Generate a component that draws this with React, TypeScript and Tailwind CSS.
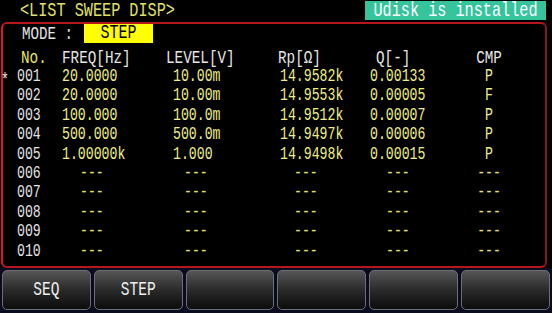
import React from "react";

type Row = {
  no: string;
  freq?: string;
  level?: string;
  rp?: string;
  q?: string;
  cmp?: string;
  active?: boolean;
};

const rows: Row[] = [
  { no: "001", freq: "20.0000", level: "10.00m", rp: "14.9582k", q: "0.00133", cmp: "P", active: true },
  { no: "002", freq: "20.0000", level: "10.00m", rp: "14.9553k", q: "0.00005", cmp: "F" },
  { no: "003", freq: "100.000", level: "100.0m", rp: "14.9512k", q: "0.00007", cmp: "P" },
  { no: "004", freq: "500.000", level: "500.0m", rp: "14.9497k", q: "0.00006", cmp: "P" },
  { no: "005", freq: "1.00000k", level: "1.000", rp: "14.9498k", q: "0.00015", cmp: "P" },
  { no: "006" },
  { no: "007" },
  { no: "008" },
  { no: "009" },
  { no: "010" },
];

const softkeys = ["SEQ", "STEP", "", "", "", ""];

const Dash = ({ pad }: { pad: string }) => (
  <span className={`${pad} text-[#e0e070]`}>---</span>
);

const App = () => {
  return (
    <div className="w-[552px] h-[313px] bg-black overflow-hidden flex flex-col font-[family-name:'Liberation_Mono',monospace]">
      {/* title bar */}
      <div className="h-[22px] flex items-start">
        <div className="ml-[20px] mt-[4px] leading-[14px] text-[15.2px] text-[#e0e068] scale-y-[1.35] whitespace-pre">
          &lt;LIST SWEEP DISP&gt;
        </div>
        <div className="ml-auto mr-[6px] mt-[1px] w-[181px] h-[19px] bg-[#36c49d] flex items-center justify-center">
          <span className="text-[15.2px] leading-[14px] text-white scale-y-[1.3] whitespace-pre">Udisk is installed</span>
        </div>
      </div>

      {/* main frame */}
      <div className="ml-[1px] w-[546px] h-[246px] rounded-[6px] border-2 border-[#b8161e] border-l-[#d81c1c] border-r-[#8c1424] bg-black flex flex-col">
        {/* mode row */}
        <div className="h-[19px] flex items-center">
          <span className="ml-[19px] w-[62px] text-[14.2px] leading-[14px] text-[#e4e4e4] scale-y-[1.35] whitespace-pre">MODE :</span>
          <div className="w-[69px] h-[19px] bg-[#ffff00] flex items-center justify-center">
            <span className="text-[15px] leading-[14px] text-black scale-y-[1.3]">STEP</span>
          </div>
        </div>

        {/* header */}
        <div className="mt-[5px] h-[19px] flex items-center text-[14.3px] leading-[14px] text-[#e6e6e6] scale-y-[1.3] whitespace-pre">
          <span className="w-[18px]" />
          <span className="w-[41px] text-[#e8e860]">No.</span>
          <span className="w-[104px]">FREQ[Hz]</span>
          <span className="w-[112px]">LEVEL[V]</span>
          <span className="w-[98px]">Rp[Ω]</span>
          <span className="w-[79px]">Q[-]</span>
          <span className="w-[68px] text-center">CMP</span>
        </div>

        {/* data rows */}
        <div className="flex flex-col">
          {rows.map((r) => (
            <div
              key={r.no}
              className="h-[19.4px] flex items-center text-[13.2px] leading-[14px] text-[#eeee88] scale-y-[1.35] whitespace-pre"
            >
              <span className="-ml-[2px] w-[16px] relative top-[3px] text-[#e6e6e6]">{r.active ? "*" : ""}</span>
              <span className="w-[45px] text-[#e2e2e2]">{r.no}</span>
              <span className="w-[111px]">{r.freq ?? <Dash pad="pl-[18px]" />}</span>
              <span className="w-[107px]">{r.level ?? <Dash pad="pl-[11px]" />}</span>
              <span className="w-[90px]">{r.rp ?? <Dash pad="pl-[14px]" />}</span>
              <span className="w-[85px]">{r.q ?? <Dash pad="pl-[16px]" />}</span>
              <span className="w-[68px] text-center">{r.cmp ?? <Dash pad="" />}</span>
            </div>
          ))}
        </div>
      </div>

      {/* softkeys */}
      <div className="flex-1 bg-[#0b0b1f] flex gap-[3px] px-[2px] pt-[2px] pb-[3px]">
        {softkeys.map((k, i) => (
          <div
            key={i}
            className="flex-1 rounded-[5px] border-[1.5px] border-[#6e6e78] bg-linear-to-b from-[#565656] via-[#2a2a2a] to-[#0c0c0c] flex items-center justify-center"
          >
            <span className="text-[14.5px] leading-[14px] text-[#f0f0f0] scale-y-[1.35]">{k}</span>
          </div>
        ))}
      </div>
    </div>
  );
};

export default App;
